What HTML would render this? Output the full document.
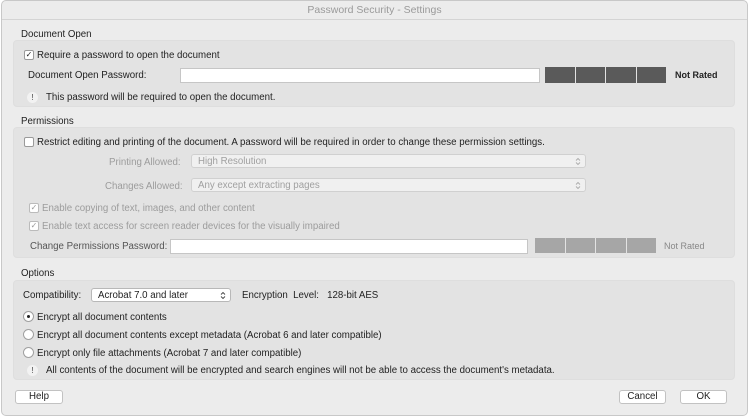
<!DOCTYPE html>
<html><head><meta charset="utf-8"><style>
*{margin:0;padding:0;box-sizing:border-box}
body{width:750px;height:419px;background:#fff;font-family:"Liberation Sans",sans-serif;font-size:9.7px;color:#222;position:relative;overflow:hidden}
.win{position:absolute;left:1px;top:0;width:747px;height:416px;background:#ececec;border:1px solid #c8c8c8;border-radius:5px}
.a{position:absolute;white-space:nowrap;margin-top:1px}
.title{position:absolute;left:0;top:0;width:100%;height:19px;border-bottom:1px solid #d4d4d4;text-align:center;line-height:19px;color:#9a9a9a;font-size:10.5px}
.box{position:absolute;left:13px;width:722px;background:#e3e3e3;border-radius:4px;border:1px solid #dedede}
.field{position:absolute;background:#fff;border:1px solid #c6c6c6;height:15px}
.cb{position:absolute;width:10px;height:10px;border:1px solid #9a9a9a;border-radius:2px;background:#fff;font-size:8px;line-height:8px;text-align:center}
.seg{position:absolute;height:16px;width:29px}
.sel{position:absolute;height:14px;background:#f0f0f0;border:1px solid #d0d0d0;border-radius:3px;color:#a0a0a0;padding-left:6px;line-height:13px}
.sel svg{position:absolute;right:4px;top:2px}
.rad{position:absolute;width:11px;height:11px;border:1px solid #a0a0a0;border-radius:50%;background:#fff}
.btn{position:absolute;height:14px;background:#fff;border:1px solid #c2c2c2;border-radius:3px;text-align:center;line-height:12px;font-size:9.7px}
.ex{position:absolute;width:11px;height:11px;border-radius:50%;background:#f2f2f2;font-size:8px;line-height:11px;text-align:center;color:#444}
.g{color:#9c9c9c}
</style></head><body>
<div class="win">
<div class="title">Password Security - Settings</div>
</div>
<div class="a" style="left:21px;top:28px">Document Open</div>
<div class="box" style="top:40px;height:67px"></div>
<div class="cb" style="left:24px;top:50px">✓</div>
<div class="a" style="left:37px;top:49px">Require a password to open the document</div>
<div class="a" style="left:28px;top:69px">Document Open Password:</div>
<div class="field" style="left:180px;top:68px;width:360px"></div>
<div class="seg" style="left:545px;top:67px;background:#5a5a5a;width:30px"></div>
<div class="seg" style="left:576px;top:67px;background:#5a5a5a"></div>
<div class="seg" style="left:606px;top:67px;background:#5a5a5a;width:30px"></div>
<div class="seg" style="left:637px;top:67px;background:#5a5a5a"></div>
<div class="a" style="left:675px;top:69px;font-weight:bold;font-size:9px">Not Rated</div>
<div class="ex" style="left:27px;top:92px">!</div>
<div class="a" style="left:46px;top:91px">This password will be required to open the document.</div>

<div class="a" style="left:21px;top:115px">Permissions</div>
<div class="box" style="top:127px;height:131px"></div>
<div class="cb" style="left:24px;top:137px"></div>
<div class="a" style="left:37px;top:136px">Restrict editing and printing of the document. A password will be required in order to change these permission settings.</div>
<div class="a g" style="left:109px;top:156px">Printing Allowed:</div>
<div class="sel" style="left:191px;top:154px;width:395px">High Resolution<svg width="6" height="9" viewBox="0 0 6 9"><path d="M1 3.5L3 1.5L5 3.5M1 5.5L3 7.5L5 5.5" fill="none" stroke="#aaa" stroke-width="0.9"/></svg></div>
<div class="a g" style="left:105px;top:180px">Changes Allowed:</div>
<div class="sel" style="left:191px;top:178px;width:395px">Any except extracting pages<svg width="6" height="9" viewBox="0 0 6 9"><path d="M1 3.5L3 1.5L5 3.5M1 5.5L3 7.5L5 5.5" fill="none" stroke="#aaa" stroke-width="0.9"/></svg></div>
<div class="cb" style="left:29px;top:203px;border-color:#bbb;color:#999">✓</div>
<div class="a g" style="left:42px;top:202px">Enable copying of text, images, and other content</div>
<div class="cb" style="left:29px;top:221px;border-color:#bbb;color:#999">✓</div>
<div class="a g" style="left:42px;top:220px">Enable text access for screen reader devices for the visually impaired</div>
<div class="a" style="left:30px;top:240px;color:#555">Change Permissions Password:</div>
<div class="field" style="left:170px;top:239px;width:358px"></div>
<div class="seg" style="left:535px;top:238px;background:#a6a6a6;width:30px;height:15px"></div>
<div class="seg" style="left:566px;top:238px;background:#a6a6a6;height:15px"></div>
<div class="seg" style="left:596px;top:238px;background:#a6a6a6;width:30px;height:15px"></div>
<div class="seg" style="left:627px;top:238px;background:#a6a6a6;height:15px"></div>
<div class="a" style="left:664px;top:240px;color:#888;font-size:9px">Not Rated</div>

<div class="a" style="left:21px;top:267px">Options</div>
<div class="box" style="top:280px;height:100px"></div>
<div class="a" style="left:23px;top:289px">Compatibility:</div>
<div class="sel" style="left:91px;top:288px;width:140px;background:#fff;color:#222;border-color:#b8b8b8">Acrobat 7.0 and later<svg width="6" height="9" viewBox="0 0 6 9"><path d="M1 3.5L3 1.5L5 3.5M1 5.5L3 7.5L5 5.5" fill="none" stroke="#444" stroke-width="0.9"/></svg></div>
<div class="a" style="left:242px;top:289px">Encryption&nbsp; Level:&nbsp;&nbsp; 128-bit AES</div>
<div class="rad" style="left:23px;top:311px"><div style="position:absolute;left:3px;top:3px;width:3px;height:3px;border-radius:50%;background:#222"></div></div>
<div class="a" style="left:37px;top:311px">Encrypt all document contents</div>
<div class="rad" style="left:23px;top:329px"></div>
<div class="a" style="left:37px;top:329px">Encrypt all document contents except metadata (Acrobat 6 and later compatible)</div>
<div class="rad" style="left:23px;top:347px"></div>
<div class="a" style="left:37px;top:347px">Encrypt only file attachments (Acrobat 7 and later compatible)</div>
<div class="ex" style="left:27px;top:365px">!</div>
<div class="a" style="left:46px;top:364px">All contents of the document will be encrypted and search engines will not be able to access the document's metadata.</div>

<div class="btn" style="left:15px;top:390px;width:48px">Help</div>
<div class="btn" style="left:619px;top:390px;width:47px">Cancel</div>
<div class="btn" style="left:680px;top:390px;width:47px">OK</div>
</body></html>
